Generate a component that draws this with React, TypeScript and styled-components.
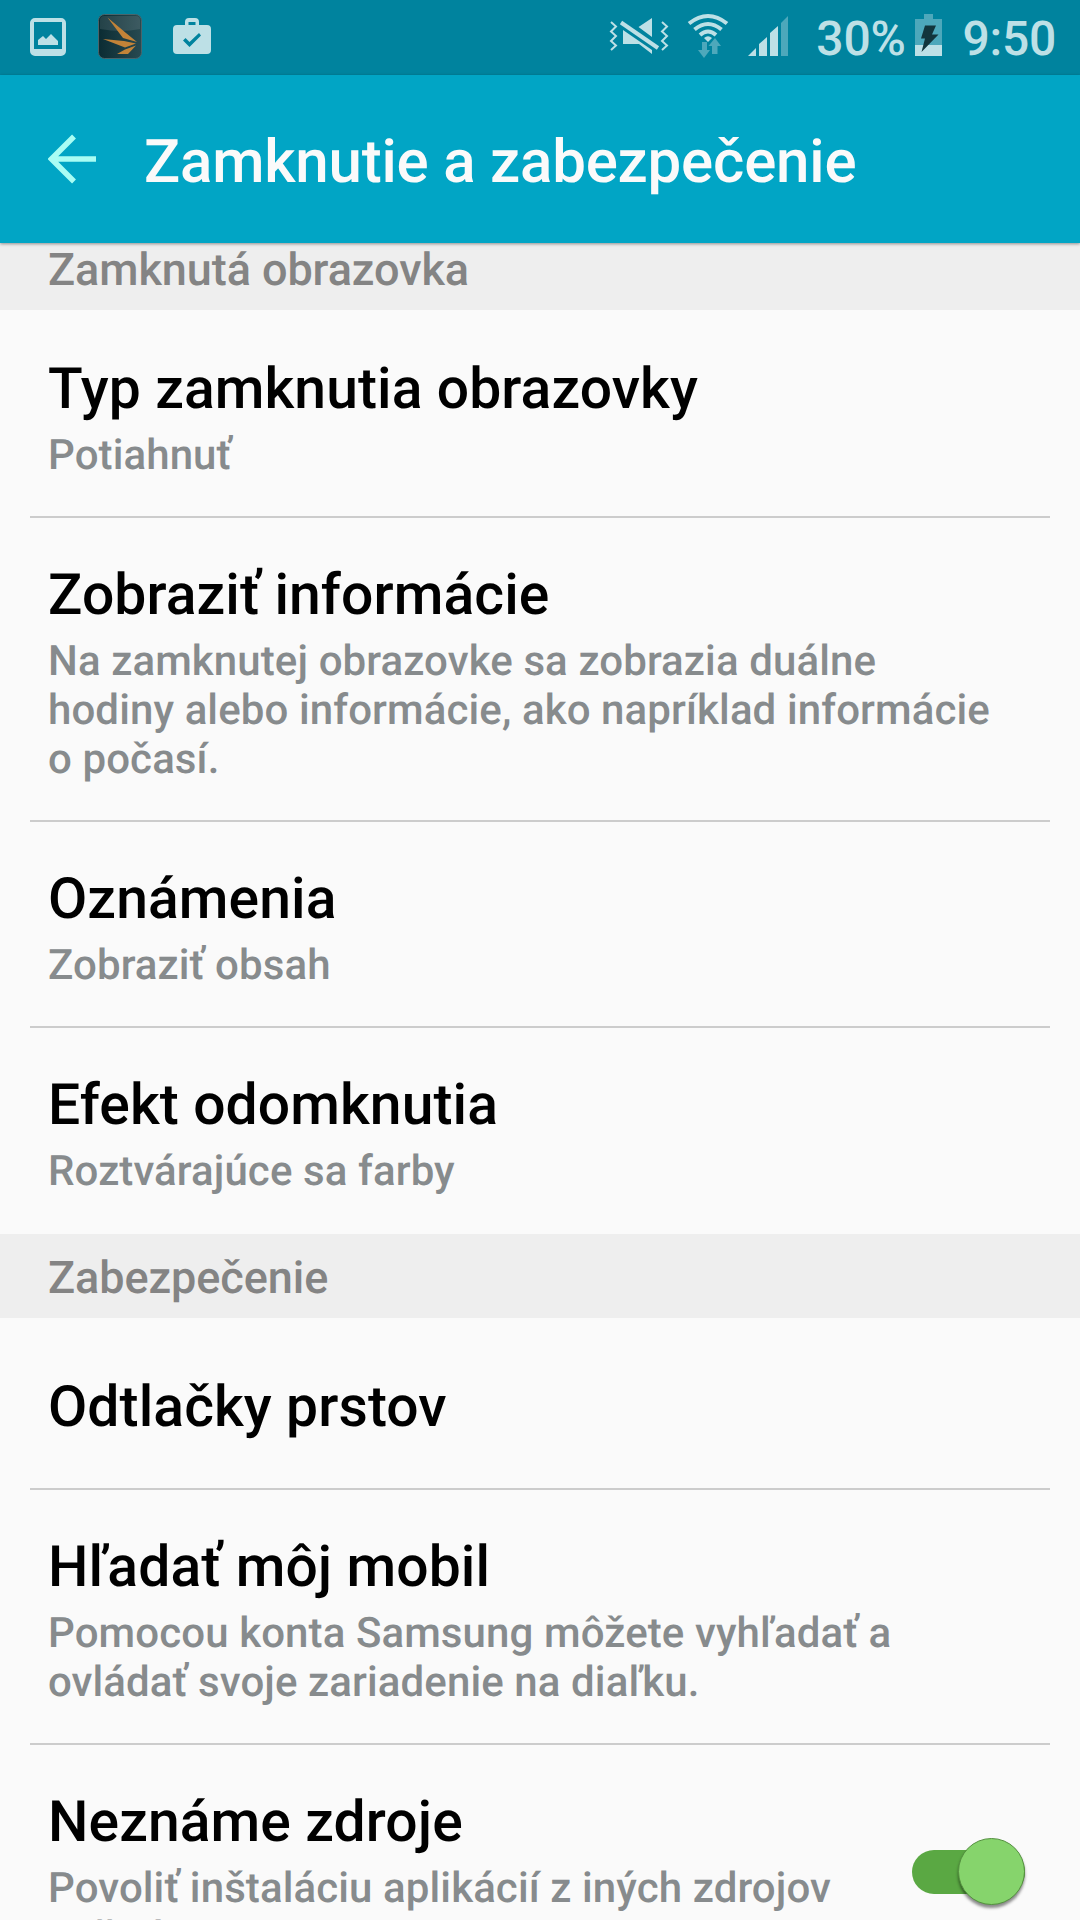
import React from 'react';
import styled, { createGlobalStyle } from 'styled-components';

const Global = createGlobalStyle`
  html, body { margin: 0; padding: 0; background: #fafafa; overflow: hidden; }
  * { box-sizing: border-box; }
`;

const Screen = styled.div`
  display: flex;
  flex-direction: column;
  width: 1080px;
  height: 1920px;
  overflow: hidden;
  background: #fafafa;
  font-family: Roboto, 'Noto Sans', sans-serif;
  font-weight: 500;
  text-rendering: geometricPrecision;
`;

const StatusBar = styled.header`
  display: flex;
  flex: none;
  align-items: flex-start;
  justify-content: space-between;
  height: 75px;
  background: #00839e;
`;

const Icons = styled.svg`
  display: block;
  flex: none;
`;

const StatusRight = styled.div`
  display: flex;
  height: 75px;
  padding-right: 24px;
`;

const StatusText = styled.span`
  font-size: 48px;
  line-height: 77px;
  letter-spacing: -0.25px;
  color: #bde0e6;
  white-space: nowrap;
`;

const Toolbar = styled.div`
  display: flex;
  flex: none;
  align-items: center;
  height: 168px;
  padding: 0 48px;
  gap: 47px;
  background: #01a5c5;
  box-shadow: 0 1px 3px rgba(0, 0, 0, 0.4);
  z-index: 1;
`;

const ToolbarTitle = styled.h1`
  margin: 6px 0 0;
  font-size: 60px;
  font-weight: 500;
  line-height: 70px;
  letter-spacing: -0.2px;
  color: #fafafa;
  white-space: nowrap;
`;

const SectionHeader = styled.h2<{ $scrolled?: boolean }>`
  flex: none;
  height: 84px;
  margin: ${(p) => (p.$scrolled ? '-17px' : '0')} 0 2px;
  padding: 17px 48px 0;
  background: #eeeeee;
  color: #848484;
  font-size: 45px;
  font-weight: 500;
  line-height: 53px;
  letter-spacing: -0.07px;
`;

const Row = styled.section<{ $last?: boolean; $single?: boolean }>`
  display: flex;
  flex: none;
  align-items: flex-start;
  justify-content: space-between;
  margin: 0 30px;
  padding: ${(p) => (p.$single ? '53px 18px 48px' : '43px 18px 36px')};
  border-bottom: 2px solid ${(p) => (p.$last ? 'transparent' : '#cccccc')};
`;

const RowTitle = styled.h3`
  margin: 0;
  font-size: 57px;
  font-weight: 500;
  line-height: 67px;
  letter-spacing: 0.1px;
  color: #000;
  white-space: nowrap;
`;

const Summary = styled.p`
  margin: 9px 0 0;
  font-size: 42px;
  line-height: 49px;
  letter-spacing: 0.1px;
  color: #878b8d;
  white-space: pre;
`;

const Track = styled.div`
  display: flex;
  flex: none;
  justify-content: flex-end;
  align-items: center;
  width: 113px;
  height: 44px;
  margin: 62px 7px 0 0;
  border-radius: 22px;
  background: #5aa843;
`;

const Thumb = styled.div`
  flex: none;
  width: 67px;
  height: 67px;
  margin-bottom: 2px;
  border-radius: 50%;
  border: 1px solid #54913f;
  background: #86d46c;
  box-shadow: 0 3px 3px rgba(0, 0, 0, 0.45);
`;

function NotificationIcons() {
  return (
    <Icons width="240" height="75" viewBox="0 0 240 75">
      <path fill="#bde0e6" fillRule="evenodd" d="M35 18h26a5 5 0 0 1 5 5v28a5 5 0 0 1-5 5H35a5 5 0 0 1-5-5V23a5 5 0 0 1 5-5zM34 22v27h28V22z" />
      <path fill="#bde0e6" d="M38 45v-5l5-4 3 3 5-5 7 7v4z" />
      <defs>
        <linearGradient id="tile" x1="0" x2="1">
          <stop offset="0" stopColor="#0b2c33" />
          <stop offset="1" stopColor="#284a51" />
        </linearGradient>
      </defs>
      <rect x="98.5" y="14.5" width="43" height="44" rx="6" fill="url(#tile)" stroke="#4a646a" />
      <path d="M100 29V20q0-4 4-4h32q4 0 4 4v9q-18 4-40 0z" fill="#fff" opacity=".1" />
      <path fill="#c38338" d="M107.500 17.500L126 33l11 9-14-4zM103 39l21 2 12 2.500-11 4zM136 45.500L128 54h-11l8-4.500z" />
      <path fill="#bde0e6" fillRule="evenodd" d="M185 25v-3q0-4 4-4h6q4 0 4 4v3h8q4 0 4 4v21q0 4-4 4h-30q-4 0-4-4V29q0-4 4-4zM188.500 25h7v-3h-7zM183 40.500l6.500 6.500L201 35.500l-2-2.500-9.500 9-4-4z" />
    </Icons>
  );
}

function SignalIcons() {
  return (
    <Icons width="216" height="75" viewBox="600 0 216 75">
      <g fill="none" stroke="#bde0e6" strokeWidth="2">
        <path d="M611 22l5 4.500-5 5 5 4.500-5 5 5 4.500-5 4.500M662 22l5 4.500-5 5 5 4.500-5 5 5 4.500-5 4.500" />
      </g>
      <path fill="#bde0e6" d="M652 18v19l-13.500-10zM623 30l29 20v4l-13-10h-16z" />
      <path d="M621 22.500l37 25.500" stroke="#00839e" strokeWidth="7" />
      <path d="M621 22.500l37 25.500" stroke="#bde0e6" strokeWidth="4" />
      <g fill="none" stroke="#bde0e6" strokeWidth="4">
        <path d="M689 23.500q19-15 38 0M694.500 29.500q13.500-11 27 0M700 35q8-7 16 0" />
      </g>
      <path fill="#bde0e6" d="M704 38q4-3.500 8 0l-4 4z" />
      <path fill="#4da8bb" d="M702 42h5v8h3l-6 8-6-8h4zM712 54v-8h-3.500l6.500-8 6 8h-3.500v8z" />
      <path fill="#bde0e6" d="M748 56l8-8v8zM759 56V44l8-7v19zM770 56V33l8-7v30z" />
      <path fill="#4da8bb" d="M781 56V23l7-7v40z" />
    </Icons>
  );
}

function BatteryIcon() {
  return (
    <Icons width="57" height="75" viewBox="905 0 57 75">
      <path fill="#4da8bb" d="M914 19h9v-5h9v5h9v26h-27z" />
      <path fill="#bde0e6" d="M914 45h27v11h-27z" />
      <path fill="#12353c" d="M924 25.500h11l-4 9h6.500L920.500 52l3.500-13.500h-4z" />
    </Icons>
  );
}

interface Item { title: string; summary?: string; last?: boolean; toggle?: boolean }

const lockItems: Item[] = [
  { title: 'Typ zamknutia obrazovky', summary: 'Potiahnuť' },
  { title: 'Zobraziť informácie', summary: 'Na zamknutej obrazovke sa zobrazia duálne\nhodiny alebo informácie, ako napríklad informácie\no počasí.' },
  { title: 'Oznámenia', summary: 'Zobraziť obsah' },
  { title: 'Efekt odomknutia', summary: 'Roztvárajúce sa farby', last: true },
];

const securityItems: Item[] = [
  { title: 'Odtlačky prstov' },
  { title: 'Hľadať môj mobil', summary: 'Pomocou konta Samsung môžete vyhľadať a\novládať svoje zariadenie na diaľku.' },
  { title: 'Neznáme zdroje', summary: 'Povoliť inštaláciu aplikácií z iných zdrojov\nnež Play Store.', last: true, toggle: true },
];

function SettingRow({ item }: { item: Item }) {
  return (
    <Row $last={item.last} $single={!item.summary}>
      <div>
        <RowTitle>{item.title}</RowTitle>
        {item.summary && <Summary>{item.summary}</Summary>}
      </div>
      {item.toggle && <Track><Thumb /></Track>}
    </Row>
  );
}

export default function App() {
  return (
    <Screen>
      <Global />
      <StatusBar>
        <NotificationIcons />
        <StatusRight>
          <SignalIcons />
          <StatusText>30%</StatusText>
          <BatteryIcon />
          <StatusText>9:50</StatusText>
        </StatusRight>
      </StatusBar>
      <Toolbar>
        <Icons width="49" height="50" viewBox="0 0 49 50">
          <path d="M26 2.500L3.500 25 26 47.500M4 25h44" fill="none" stroke="#a9fdf4" strokeWidth="5.500" />
        </Icons>
        <ToolbarTitle>Zamknutie a zabezpečenie</ToolbarTitle>
      </Toolbar>
      <SectionHeader $scrolled>Zamknutá obrazovka</SectionHeader>
      {lockItems.map((item) => <SettingRow key={item.title} item={item} />)}
      <SectionHeader>Zabezpečenie</SectionHeader>
      {securityItems.map((item) => <SettingRow key={item.title} item={item} />)}
    </Screen>
  );
}
